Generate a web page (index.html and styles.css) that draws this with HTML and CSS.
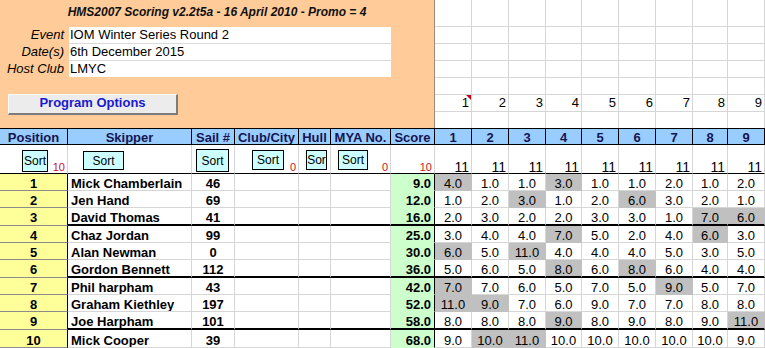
FILE: index.html
```html
<!DOCTYPE html>
<html>
<head>
<meta charset="utf-8">
<title>HMS2007 Scoring</title>
<link rel="stylesheet" href="styles.css">
</head>
<body>
<div class="sheet">
  <div class="panel">
    <div class="title">HMS2007 Scoring v2.2t5a - 16 April 2010 - Promo = 4</div>
    <div class="info">
      <div class="lbl">Event</div><div class="val">IOM Winter Series Round 2</div>
      <div class="lbl">Date(s)</div><div class="val">6th December 2015</div>
      <div class="lbl">Host Club</div><div class="val">LMYC</div>
    </div>
    <button class="prog">Program Options</button>
  </div>

  <div class="rw"><div class="c t"></div><div class="c t"></div><div class="c t"></div><div class="c t"></div><div class="c t"></div><div class="c t"></div><div class="c t"></div><div class="c t"></div><div class="c t"></div></div>
  <div class="rw"><div class="c t"></div><div class="c t"></div><div class="c t"></div><div class="c t"></div><div class="c t"></div><div class="c t"></div><div class="c t"></div><div class="c t"></div><div class="c t"></div></div>
  <div class="rw"><div class="c t"></div><div class="c t"></div><div class="c t"></div><div class="c t"></div><div class="c t"></div><div class="c t"></div><div class="c t"></div><div class="c t"></div><div class="c t"></div></div>
  <div class="rw"><div class="c t"></div><div class="c t"></div><div class="c t"></div><div class="c t"></div><div class="c t"></div><div class="c t"></div><div class="c t"></div><div class="c t"></div><div class="c t"></div></div>
  <div class="rw"><div class="c t"></div><div class="c t"></div><div class="c t"></div><div class="c t"></div><div class="c t"></div><div class="c t"></div><div class="c t"></div><div class="c t"></div><div class="c t"></div></div>
  <div class="rw"><div class="c t num note">1</div><div class="c t num">2</div><div class="c t num">3</div><div class="c t num">4</div><div class="c t num">5</div><div class="c t num">6</div><div class="c t num">7</div><div class="c t num">8</div><div class="c t num">9</div></div>
  <div class="rw"><div class="c t e"></div><div class="c t e"></div><div class="c t e"></div><div class="c t e"></div><div class="c t e"></div><div class="c t e"></div><div class="c t e"></div><div class="c t e"></div><div class="c t e"></div></div>

  <div class="rw hdr">
    <div class="c h">Position</div><div class="c h">Skipper</div><div class="c h">Sail #</div><div class="c h">Club/City</div><div class="c h">Hull</div><div class="c h">MYA No.</div><div class="c h">Score</div>
    <div class="c h">1</div><div class="c h">2</div><div class="c h">3</div><div class="c h">4</div><div class="c h">5</div><div class="c h">6</div><div class="c h">7</div><div class="c h">8</div><div class="c h">9</div>
  </div>

  <div class="rw srow">
    <div class="c s s-pos"><button class="sb b-pos">Sort</button><span class="red">10</span></div>
    <div class="c s s-skp"><button class="sb b-skp">Sort</button></div>
    <div class="c s s-sail"><button class="sb b-sail">Sort</button></div>
    <div class="c s s-club"><button class="sb b-club">Sort</button><span class="red">0</span></div>
    <div class="c s s-hull"><button class="sb b-hull">Sor</button></div>
    <div class="c s s-mya"><button class="sb b-mya">Sort</button><span class="red">0</span></div>
    <div class="c s s-score"><span class="red">10</span></div>
    <div class="c s cnt">11</div><div class="c s cnt">11</div><div class="c s cnt">11</div><div class="c s cnt">11</div><div class="c s cnt">11</div><div class="c s cnt">11</div><div class="c s cnt">11</div><div class="c s cnt">11</div><div class="c s cnt">11</div>
  </div>

  <div class="rw"><div class="c p">1</div><div class="c nm">Mick Chamberlain</div><div class="c sl">46</div><div class="c"></div><div class="c"></div><div class="c"></div><div class="c sc">9.0</div><div class="c r g">4.0</div><div class="c r">1.0</div><div class="c r">1.0</div><div class="c r g">3.0</div><div class="c r">1.0</div><div class="c r">1.0</div><div class="c r">2.0</div><div class="c r">1.0</div><div class="c r">2.0</div></div>
  <div class="rw"><div class="c p">2</div><div class="c nm">Jen Hand</div><div class="c sl">69</div><div class="c"></div><div class="c"></div><div class="c"></div><div class="c sc">12.0</div><div class="c r">1.0</div><div class="c r">2.0</div><div class="c r g">3.0</div><div class="c r">1.0</div><div class="c r">2.0</div><div class="c r g">6.0</div><div class="c r">3.0</div><div class="c r">2.0</div><div class="c r">1.0</div></div>
  <div class="rw k"><div class="c p">3</div><div class="c nm">David Thomas</div><div class="c sl">41</div><div class="c"></div><div class="c"></div><div class="c"></div><div class="c sc">16.0</div><div class="c r">2.0</div><div class="c r">3.0</div><div class="c r">2.0</div><div class="c r">2.0</div><div class="c r">3.0</div><div class="c r">3.0</div><div class="c r">1.0</div><div class="c r g">7.0</div><div class="c r g">6.0</div></div>
  <div class="rw"><div class="c p">4</div><div class="c nm">Chaz Jordan</div><div class="c sl">99</div><div class="c"></div><div class="c"></div><div class="c"></div><div class="c sc">25.0</div><div class="c r">3.0</div><div class="c r">4.0</div><div class="c r">4.0</div><div class="c r g">7.0</div><div class="c r">5.0</div><div class="c r">2.0</div><div class="c r">4.0</div><div class="c r g">6.0</div><div class="c r">3.0</div></div>
  <div class="rw"><div class="c p">5</div><div class="c nm">Alan Newman</div><div class="c sl">0</div><div class="c"></div><div class="c"></div><div class="c"></div><div class="c sc">30.0</div><div class="c r g">6.0</div><div class="c r">5.0</div><div class="c r g">11.0</div><div class="c r">4.0</div><div class="c r">4.0</div><div class="c r">4.0</div><div class="c r">5.0</div><div class="c r">3.0</div><div class="c r">5.0</div></div>
  <div class="rw k"><div class="c p">6</div><div class="c nm">Gordon Bennett</div><div class="c sl">112</div><div class="c"></div><div class="c"></div><div class="c"></div><div class="c sc">36.0</div><div class="c r">5.0</div><div class="c r">6.0</div><div class="c r">5.0</div><div class="c r g">8.0</div><div class="c r">6.0</div><div class="c r g">8.0</div><div class="c r">6.0</div><div class="c r">4.0</div><div class="c r">4.0</div></div>
  <div class="rw"><div class="c p">7</div><div class="c nm">Phil harpham</div><div class="c sl">43</div><div class="c"></div><div class="c"></div><div class="c"></div><div class="c sc">42.0</div><div class="c r g">7.0</div><div class="c r">7.0</div><div class="c r">6.0</div><div class="c r">5.0</div><div class="c r">7.0</div><div class="c r">5.0</div><div class="c r g">9.0</div><div class="c r">5.0</div><div class="c r">7.0</div></div>
  <div class="rw"><div class="c p">8</div><div class="c nm">Graham Kiethley</div><div class="c sl">197</div><div class="c"></div><div class="c"></div><div class="c"></div><div class="c sc">52.0</div><div class="c r g">11.0</div><div class="c r g">9.0</div><div class="c r">7.0</div><div class="c r">6.0</div><div class="c r">9.0</div><div class="c r">7.0</div><div class="c r">7.0</div><div class="c r">8.0</div><div class="c r">8.0</div></div>
  <div class="rw k"><div class="c p">9</div><div class="c nm">Joe Harpham</div><div class="c sl">101</div><div class="c"></div><div class="c"></div><div class="c"></div><div class="c sc">58.0</div><div class="c r">8.0</div><div class="c r">8.0</div><div class="c r">8.0</div><div class="c r g">9.0</div><div class="c r">8.0</div><div class="c r">9.0</div><div class="c r">8.0</div><div class="c r">9.0</div><div class="c r g">11.0</div></div>
  <div class="rw"><div class="c p">10</div><div class="c nm">Mick Cooper</div><div class="c sl">39</div><div class="c"></div><div class="c"></div><div class="c"></div><div class="c sc">68.0</div><div class="c r">9.0</div><div class="c r g">10.0</div><div class="c r g">11.0</div><div class="c r">10.0</div><div class="c r">10.0</div><div class="c r">10.0</div><div class="c r">10.0</div><div class="c r">10.0</div><div class="c r">9.0</div></div>
</div>
</body>
</html>
```

FILE: styles.css
```css
* { box-sizing: border-box; }

html, body {
  margin: 0;
  padding: 0;
  background: #ffffff;
}

body {
  font-family: "Liberation Sans", Arial, sans-serif;
  font-size: 13px;
  color: #000;
  width: 765px;
  height: 348px;
  overflow: hidden;
}

.sheet {
  display: grid;
  grid-template-columns: 68px 124px 43px 64px 32px 60px 44px 37px 37px 37px 36px 37px 37px 37px 35px 37px;
  grid-template-rows: 27px 17px 17px 17px 17px 17px 16px 17px 29px 17px 17px 18px 17px 17px 18px 17px 17px 18px 18px;
}

.rw { display: contents; }

/* ---------- orange panel ---------- */
.panel {
  grid-column: 1 / 8;
  grid-row: 1 / 8;
  background: #ffcc99;
  border-right: 1px solid #a08a76;
  display: flex;
  flex-direction: column;
  align-items: flex-start;
}

.title {
  width: 100%;
  height: 27px;
  padding-top: 6px;
  text-align: center;
  font-weight: bold;
  font-style: italic;
  font-size: 12px;
  line-height: 12px;
  color: #111;
}

.info {
  display: grid;
  grid-template-columns: 69px 322px;
  grid-template-rows: 17px 17px 16px;
}

.lbl {
  font-style: italic;
  text-align: right;
  padding-right: 5px;
  line-height: 16px;
  white-space: nowrap;
}

.val {
  background: #fff;
  border-bottom: 1px solid #d9d9d9;
  padding-left: 1px;
  line-height: 16px;
  white-space: nowrap;
}

.val:last-child { border-bottom: none; }

.prog {
  margin: 17px 0 0 8px;
  width: 170px;
  height: 21px;
  padding: 0 0 2px;
  background: #ececec;
  border-style: solid;
  border-width: 1px 2px 2px 1px;
  border-color: #fbfbfb #7c7c7c #7c7c7c #fbfbfb;
  font-family: "Liberation Sans", Arial, sans-serif;
  font-weight: bold;
  font-size: 13px;
  line-height: 16px;
  color: #1a1acc;
}

/* ---------- generic cells ---------- */
.c {
  display: flex;
  align-items: flex-end;
  border-right: 1px solid #d6d6d6;
  border-bottom: 1px solid #d6d6d6;
  line-height: 12px;
  white-space: nowrap;
  overflow: hidden;
}

.t.e { border-bottom: none; }

.num {
  justify-content: flex-end;
  padding-right: 2px;
  padding-bottom: 2px;
}

.note { position: relative; overflow: visible; }
.note::after {
  content: "";
  position: absolute;
  top: 0;
  right: 0;
  border-top: 5px solid #c8001e;
  border-left: 5px solid transparent;
}

/* ---------- header ---------- */
.h {
  background: #99ccff;
  border-top: 1px solid #000;
  border-bottom: 1px solid #000;
  border-right: 1px solid #000;
  justify-content: center;
  font-weight: bold;
  color: #151550;
}

/* ---------- sort row ---------- */
.s {
  align-items: flex-start;
  border-bottom: 1px solid #000;
  padding-right: 2px;
}

.sb {
  display: block;
  flex: none;
  padding: 0;
  background: #ccffff;
  border: 1px solid #000;
  font-family: "Liberation Sans", Arial, sans-serif;
  font-size: 12px;
  line-height: 12px;
  color: #000;
  overflow: hidden;
}

.b-pos  { margin: 5px 0 0 22px; width: 26px; height: 22px; }
.b-skp  { margin: 6px 0 0 15px; width: 41px; height: 19px; }
.b-sail { margin: 4px 0 0 4px;  width: 33px; height: 23px; }
.b-club { margin: 5px 0 0 17px; width: 32px; height: 20px; }
.b-hull { margin: 5px 0 0 7px;  width: 21px; height: 20px; }
.b-mya  { margin: 5px 0 0 7px;  width: 30px; height: 20px; }

.red {
  margin-left: auto;
  align-self: flex-end;
  color: #d0101e;
  font-size: 11px;
  line-height: 11px;
}

.cnt {
  align-items: flex-end;
  justify-content: flex-end;
  font-size: 14px;
  line-height: 11px;
}

/* ---------- data rows ---------- */
.p {
  background: #ffff99;
  border-right: 1px solid #000;
  border-bottom: 1px solid #8c8c8c;
  justify-content: center;
  font-weight: bold;
}

.nm {
  padding-left: 3px;
  font-weight: bold;
}

.sl {
  justify-content: center;
  font-weight: bold;
}

.sc {
  background: #ccffcc;
  border-right: 1px solid #000;
  border-bottom-color: #ccffcc;
  justify-content: flex-end;
  padding-right: 3px;
  font-weight: bold;
}

.r { justify-content: center; }

.g {
  background: #c0c0c0;
  border-right-color: #c0c0c0;
  border-bottom-color: #c0c0c0;
}

.rw.k > .c { border-bottom: 2px solid #000; }
.rw.k > .c.p { border-bottom: 1px solid #8c8c8c; padding-bottom: 1px; }
```
